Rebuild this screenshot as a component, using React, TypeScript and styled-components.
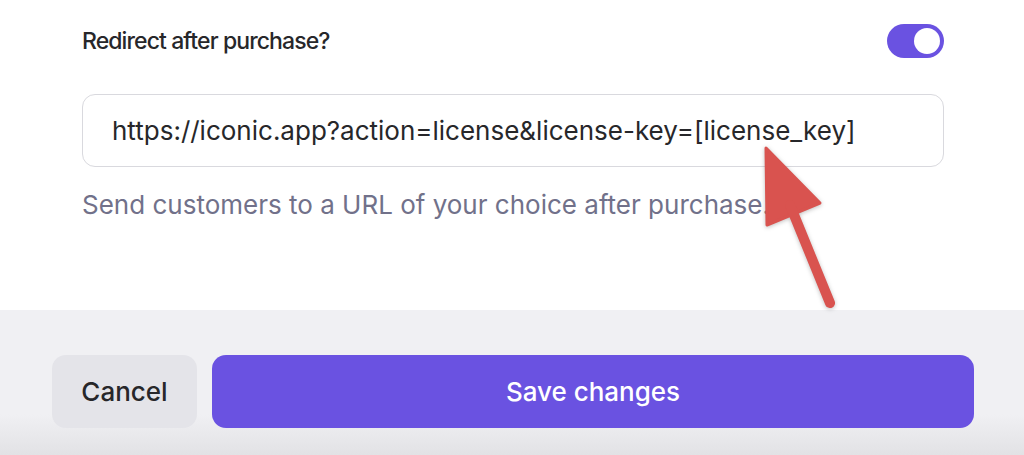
import React from 'react';
import styled, { createGlobalStyle } from 'styled-components';

const GlobalStyle = createGlobalStyle`
  html, body {
    margin: 0;
    padding: 0;
    background: #ffffff;
    font-family: Inter, "Noto Sans", sans-serif;
    -webkit-font-smoothing: antialiased;
  }
`;

const Page = styled.div`
  position: relative;
  width: 1024px;
  height: 455px;
  overflow: hidden;
  display: flex;
  flex-direction: column;
`;

const Body = styled.section`
  height: 310px;
  box-sizing: border-box;
  padding: 24px 80px 0 82px;
  background: #ffffff;
`;

const FieldHeader = styled.div`
  display: flex;
  align-items: center;
  justify-content: space-between;
  height: 34px;
`;

const Label = styled.span`
  font-size: 23px;
  font-weight: 500;
  color: #27272a;
  letter-spacing: -0.9px;
`;

const Toggle = styled.button<{ $on: boolean }>`
  position: relative;
  width: 57px;
  height: 34px;
  border: none;
  padding: 0;
  border-radius: 17px;
  background: ${(p) => (p.$on ? '#6a52e1' : '#d4d4d8')};
  cursor: pointer;

  &::after {
    content: '';
    position: absolute;
    top: 4px;
    left: ${(p) => (p.$on ? '27px' : '4px')};
    width: 26px;
    height: 26px;
    border-radius: 50%;
    background: #ffffff;
  }
`;

const UrlInput = styled.input`
  display: block;
  margin-top: 36px;
  width: 100%;
  height: 73px;
  box-sizing: border-box;
  padding: 0 29px;
  border: 1.5px solid #d9d9de;
  border-radius: 13px;
  font-family: Inter, "Noto Sans", sans-serif;
  font-size: 26px;
  color: #27272a;
  background: #ffffff;
  outline: none;
`;

const Hint = styled.p`
  margin: 22px 0 0;
  font-size: 26px;
  line-height: 32px;
  color: #71718a;
`;

const Footer = styled.footer`
  flex: 1;
  display: flex;
  gap: 15px;
  padding: 45px 50px 0 52px;
  background: linear-gradient(to bottom, #f0f0f3 0%, #f0f0f3 72%, #e9e9ec 86%, #e2e2e5 100%);
`;

const Button = styled.button<{ $primary?: boolean }>`
  height: 73px;
  border: none;
  border-radius: 14px;
  font-family: Inter, "Noto Sans", sans-serif;
  font-size: 26px;
  font-weight: 500;
  cursor: pointer;
  background: ${(p) => (p.$primary ? '#6a52e1' : '#e4e4e9')};
  color: ${(p) => (p.$primary ? '#ffffff' : '#27272a')};
  ${(p) => (p.$primary ? 'flex: 1;' : 'width: 145px;')}
`;

const Arrow = styled.svg`
  position: absolute;
  left: 0;
  top: 0;
  pointer-events: none;
  filter: drop-shadow(0 1px 2px rgba(0, 0, 0, 0.25));
`;

export default function App() {
  return (
    <>
      <GlobalStyle />
      <Page>
        <Body>
          <FieldHeader>
            <Label>Redirect after purchase?</Label>
            <Toggle $on aria-label="Redirect after purchase" />
          </FieldHeader>
          <UrlInput
            readOnly
            value="https://iconic.app?action=license&license-key=[license_key]"
          />
          <Hint>Send customers to a URL of your choice after purchase.</Hint>
        </Body>
        <Footer>
          <Button>Cancel</Button>
          <Button $primary>Save changes</Button>
        </Footer>
        <Arrow width="1024" height="455" viewBox="0 0 1024 455">
          <path
            d="M766 148 L820 203 L767 225 Z"
            fill="#d9534f"
            stroke="#d9534f"
            strokeWidth="3"
            strokeLinejoin="round"
          />
          <line
            x1="790"
            y1="205"
            x2="830"
            y2="303"
            stroke="#d9534f"
            strokeWidth="10"
            strokeLinecap="round"
          />
        </Arrow>
      </Page>
    </>
  );
}
